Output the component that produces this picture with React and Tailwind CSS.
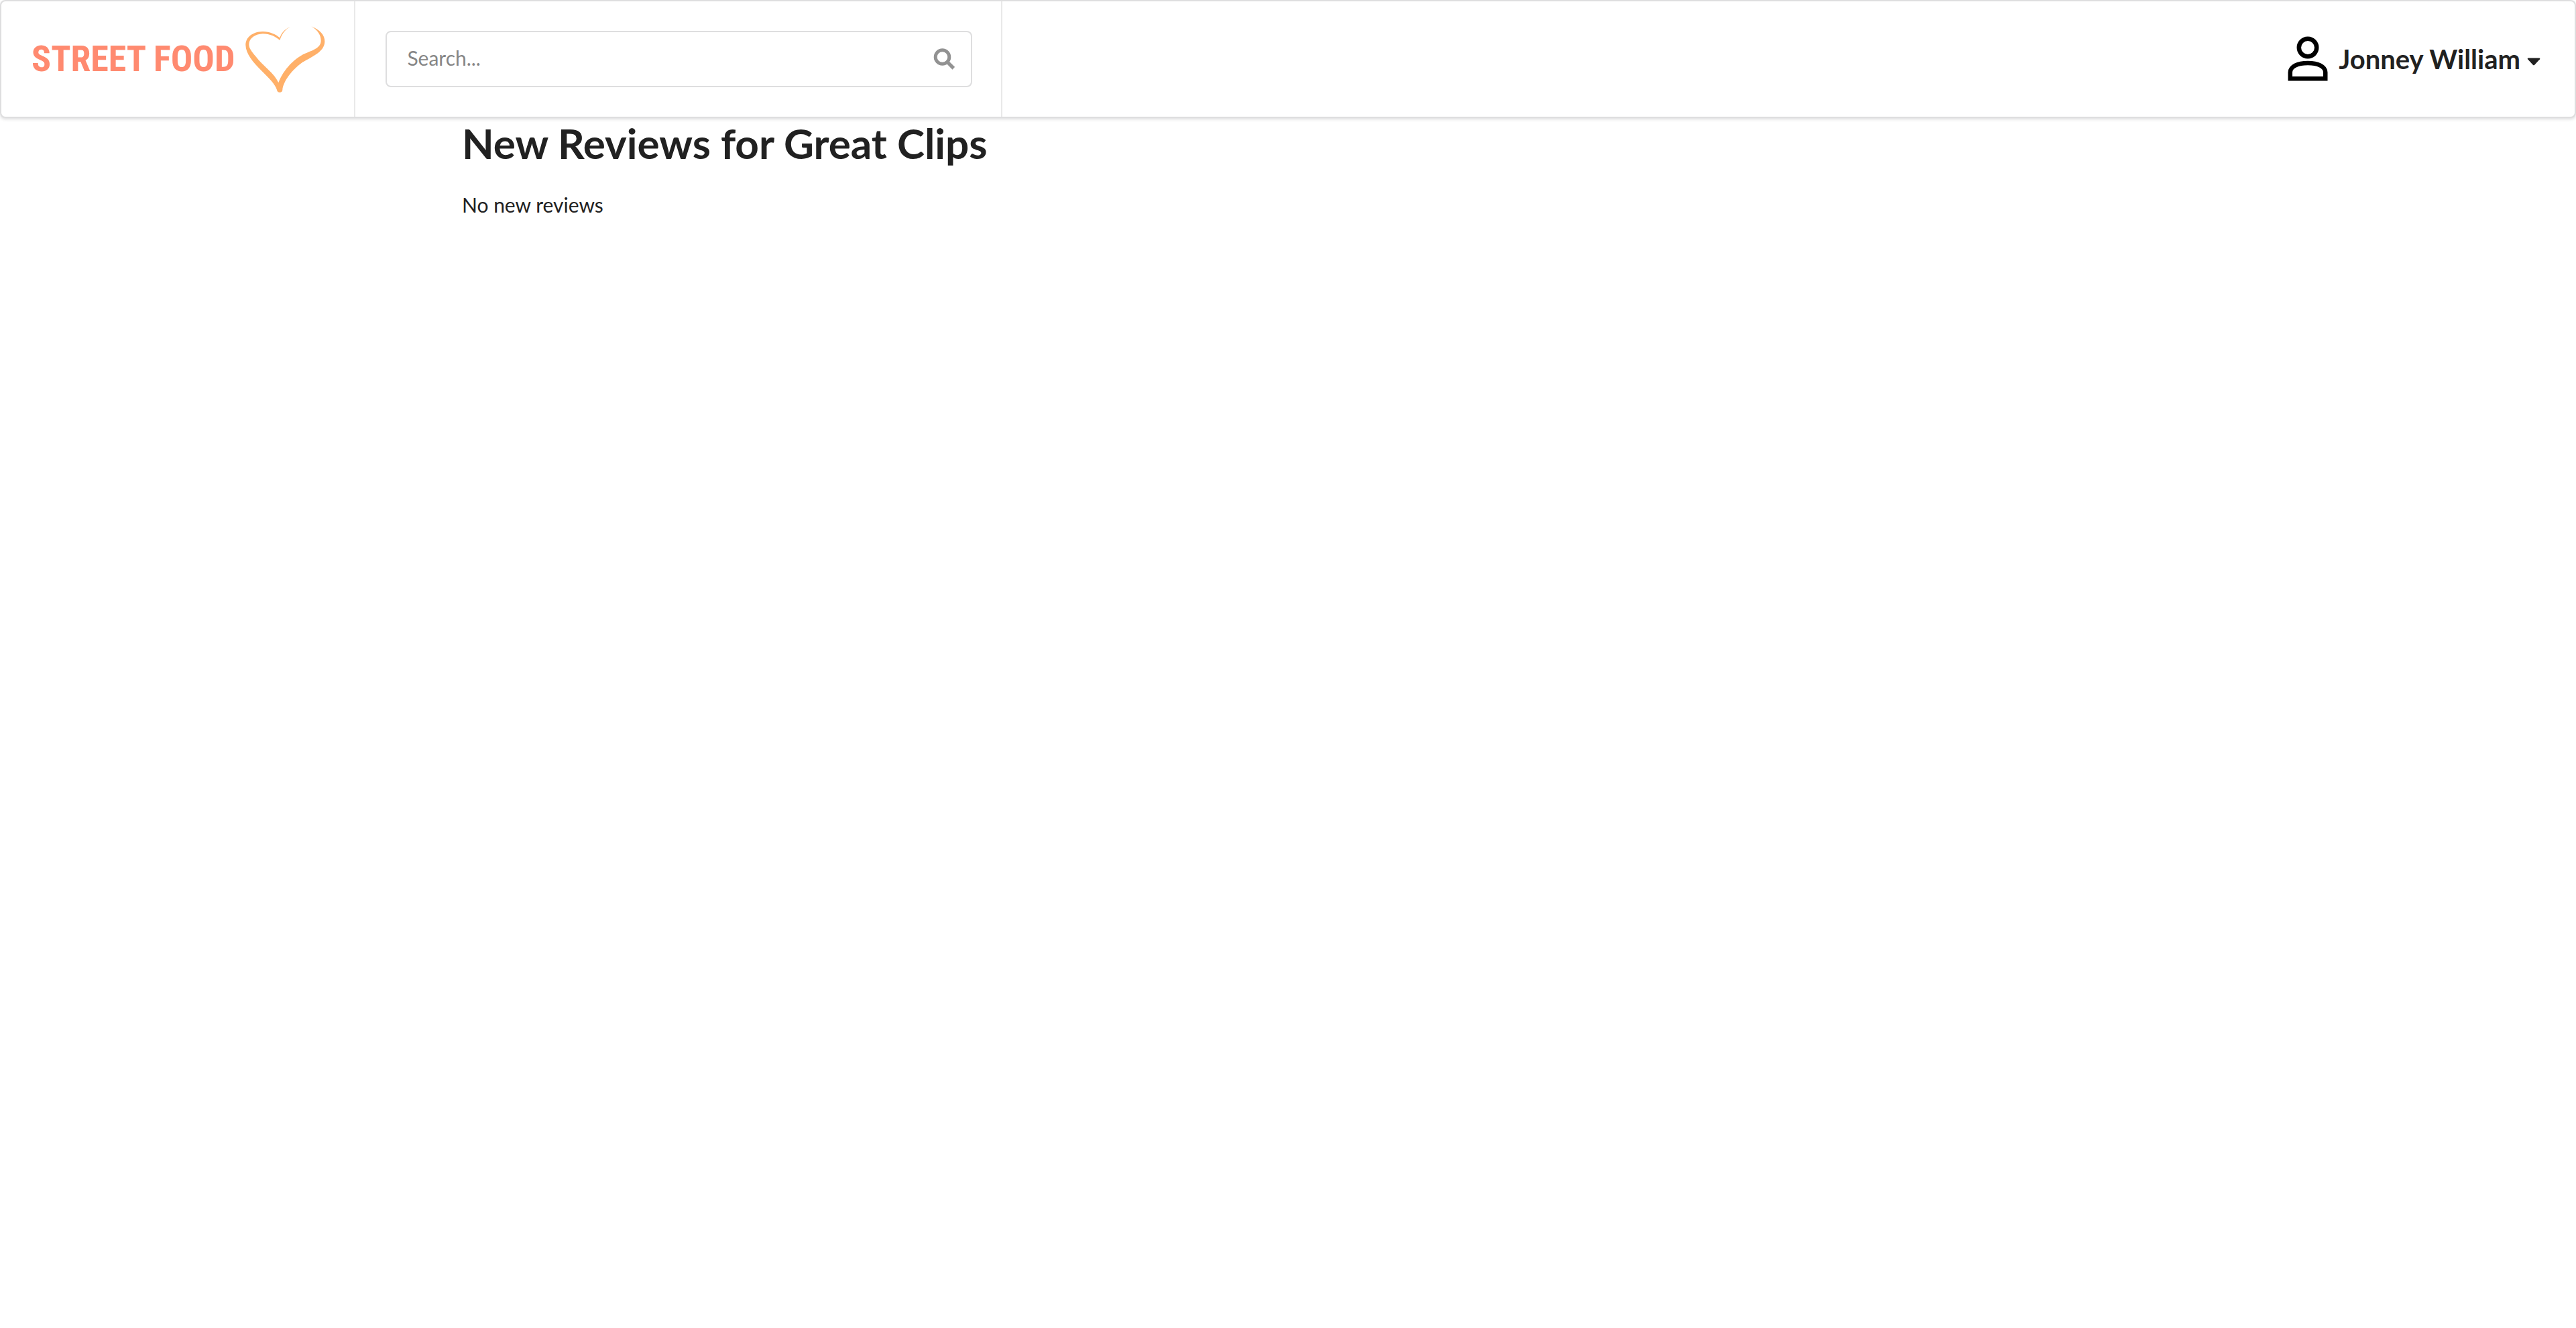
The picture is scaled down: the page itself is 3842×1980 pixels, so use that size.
import React from "react";

function Heart() {
  return (
    <svg viewBox="50 55 357 297" className="h-[99px] w-[119px] shrink-0" fill="#ffb069" aria-hidden="true">
      <path d="M251 58C228 67 212 83 204 107C185 90 155 78 126 79C80 81 51 105 51 140C52 180 85 217 120 252C155 287 182 312 191 340Q192 351 204 351Q215 351 216 340C218 308 250 258 298 222C340 194 403 174 405 125C406 95 382 70 345 56C375 74 388 95 388 122C387 148 362 160 325 174C275 192 220 248 198 308C180 265 130 235 96 190C78 168 66 155 66 136C67 108 95 90 128 89C160 89 185 102 204 118C213 88 230 68 251 58Z" />
    </svg>
  );
}

function Person() {
  return (
    <svg viewBox="0 0 60 68" className="h-[68px] w-[60px] shrink-0" fill="none" stroke="#000" strokeWidth="6.500" aria-hidden="true">
      <circle cx="30" cy="17" r="13.200" />
      <path d="M3.750 63.250V54C3.750 45 15 40 30 40S56.250 45 56.250 54V63.250Z" />
    </svg>
  );
}

export default function App() {
  return (
    <div className="min-h-screen bg-white font-['Lato',sans-serif] text-[#212121]">
      <nav className="flex h-44 items-stretch rounded-lg border-2 border-[#dededf] bg-white shadow-[0_2px_4px_0_rgba(34,36,38,0.15)]">
        <a href="#home" className="flex shrink-0 items-center gap-4 border-r-2 border-[#e9e9e9] pr-[43px] pl-[45px]">
          <span className="whitespace-nowrap font-['Roboto_Condensed','Liberation_Sans_Narrow',sans-serif] text-[54px] leading-none font-bold text-[#ff8a70]">
            STREET FOOD
          </span>
          <Heart />
        </a>
        <div className="flex items-center border-r-2 border-[#e9e9e9] pr-[43px] pl-[45px]">
          <form className="relative" role="search" onSubmit={(e) => e.preventDefault()}>
            <input
              type="text"
              aria-label="Search"
              placeholder="Search..."
              className="h-[84px] w-[875px] rounded-lg border-2 border-[#dededf] bg-white pr-20 pb-1 pl-[30px] text-[30px] placeholder:text-[#868686] outline-none"
            />
            <button type="submit" aria-label="Search" className="absolute inset-y-6 right-6 flex w-9 items-center justify-center">
              <svg viewBox="0 0 32 32" className="size-8" fill="none" stroke="#929292" aria-hidden="true">
                <circle cx="13.500" cy="13" r="10.300" strokeWidth="5" />
                <path d="M21 20.500L30.300 29.800" strokeWidth="5.200" />
              </svg>
            </button>
          </form>
        </div>
        <button type="button" className="ml-auto flex items-center pr-[51px] text-[40px] font-bold">
          <Person />
          <span className="ml-4">Jonney William</span>
          <svg viewBox="0 0 20 12" className="mt-2 ml-2.5 h-3 w-5" fill="#212121" aria-hidden="true">
            <path d="M1.500 0.500H18.500Q20 1 19 2.300L11.200 10.700Q10 11.800 8.800 10.700L1 2.300Q0 1 1.500 0.500Z" />
          </svg>
        </button>
      </nav>
      <main className="mx-auto max-w-[2464px]">
        <h1 className="text-[62px] leading-[74px] font-bold">New Reviews for Great Clips</h1>
        <p className="mt-8 text-[30px] leading-[46px]">No new reviews</p>
      </main>
    </div>
  );
}
